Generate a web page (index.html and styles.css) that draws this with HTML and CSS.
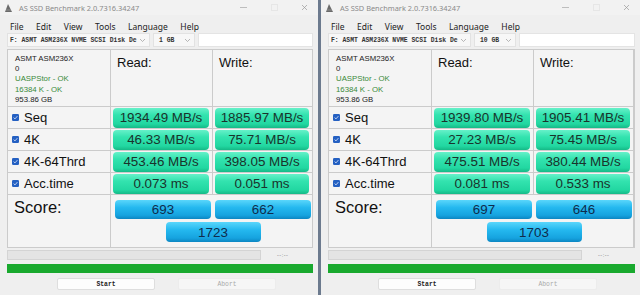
FILE: index.html
```html
<!DOCTYPE html>
<html>
<head>
<meta charset="utf-8">
<link rel="stylesheet" href="styles.css">
</head>
<body>
<div class="win">
  <div class="titlebar">
    <svg class="appicon" width="7" height="8" viewBox="0 0 7 8"><polygon points="3,0 7,8 0,8" fill="#6a6a6a"/><line x1="1" y1="6" x2="6" y2="6" stroke="#aaa" stroke-width="0.6"/></svg>
    <span class="title">AS SSD Benchmark 2.0.7316.34247</span>
    <span class="ctl min"></span>
    <span class="ctl max"></span>
    <svg class="ctl close" width="5" height="5" viewBox="0 0 5 5"><path d="M0 0L5 5M5 0L0 5" stroke="#9a9a9a" stroke-width="0.7"/></svg>
  </div>
  <div class="menubar"><span>File</span><span>Edit</span><span>View</span><span>Tools</span><span>Language</span><span>Help</span></div>
  <div class="toolbar">
    <div class="combo drive"><span>F: ASMT ASM236X NVME SCSI Disk De</span><svg width="5" height="3" viewBox="0 0 5 3"><path d="M0 0L2.5 2.5L5 0" fill="none" stroke="#999" stroke-width="0.7"/></svg></div>
    <div class="combo size"><span>1 GB</span><svg width="5" height="3" viewBox="0 0 5 3"><path d="M0 0L2.5 2.5L5 0" fill="none" stroke="#999" stroke-width="0.7"/></svg></div>
    <div class="field"></div>
  </div>
  <div class="grid">
    <div class="cell info">
      <div>ASMT ASM236X</div>
      <div>0</div>
      <div class="ok">UASPStor - OK</div>
      <div class="ok">16384 K - OK</div>
      <div>953.86 GB</div>
    </div>
    <div class="cell head">Read:</div>
    <div class="cell head">Write:</div>

    <div class="cell label"><svg class="chk" width="7" height="7" viewBox="0 0 7 7"><rect width="7" height="7" rx="1.3" fill="#2460c2"/><path d="M1.6 3.6L3 4.9L5.4 2.1" fill="none" stroke="#dfe9fb" stroke-width="0.8"/></svg>Seq</div>
    <div class="cell val"><div class="bar">1934.49 MB/s</div></div>
    <div class="cell val"><div class="bar">1885.97 MB/s</div></div>

    <div class="cell label"><svg class="chk" width="7" height="7" viewBox="0 0 7 7"><rect width="7" height="7" rx="1.3" fill="#2460c2"/><path d="M1.6 3.6L3 4.9L5.4 2.1" fill="none" stroke="#dfe9fb" stroke-width="0.8"/></svg>4K</div>
    <div class="cell val"><div class="bar">46.33 MB/s</div></div>
    <div class="cell val"><div class="bar">75.71 MB/s</div></div>

    <div class="cell label"><svg class="chk" width="7" height="7" viewBox="0 0 7 7"><rect width="7" height="7" rx="1.3" fill="#2460c2"/><path d="M1.6 3.6L3 4.9L5.4 2.1" fill="none" stroke="#dfe9fb" stroke-width="0.8"/></svg>4K-64Thrd</div>
    <div class="cell val"><div class="bar">453.46 MB/s</div></div>
    <div class="cell val"><div class="bar">398.05 MB/s</div></div>

    <div class="cell label"><svg class="chk" width="7" height="7" viewBox="0 0 7 7"><rect width="7" height="7" rx="1.3" fill="#2460c2"/><path d="M1.6 3.6L3 4.9L5.4 2.1" fill="none" stroke="#dfe9fb" stroke-width="0.8"/></svg>Acc.time</div>
    <div class="cell val"><div class="bar">0.073 ms</div></div>
    <div class="cell val"><div class="bar">0.051 ms</div></div>

    <div class="cell score-label">Score:</div>
    <div class="cell scores">
      <div class="sbar">693</div>
      <div class="sbar">662</div>
      <div class="sbar total">1723</div>
    </div>
  </div>
  <div class="progress-row"><div class="progress"></div><span class="time">--:--</span></div>
  <div class="greenbar"></div>
  <div class="buttons"><div class="btn start">Start</div><div class="btn abort">Abort</div></div>
</div>

<div class="win win-right">
  <div class="titlebar">
    <svg class="appicon" width="7" height="8" viewBox="0 0 7 8"><polygon points="3,0 7,8 0,8" fill="#6a6a6a"/><line x1="1" y1="6" x2="6" y2="6" stroke="#aaa" stroke-width="0.6"/></svg>
    <span class="title">AS SSD Benchmark 2.0.7316.34247</span>
    <span class="ctl min"></span>
    <span class="ctl max"></span>
    <svg class="ctl close" width="5" height="5" viewBox="0 0 5 5"><path d="M0 0L5 5M5 0L0 5" stroke="#9a9a9a" stroke-width="0.7"/></svg>
  </div>
  <div class="menubar"><span>File</span><span>Edit</span><span>View</span><span>Tools</span><span>Language</span><span>Help</span></div>
  <div class="toolbar">
    <div class="combo drive"><span>F: ASMT ASM236X NVME SCSI Disk De</span><svg width="5" height="3" viewBox="0 0 5 3"><path d="M0 0L2.5 2.5L5 0" fill="none" stroke="#999" stroke-width="0.7"/></svg></div>
    <div class="combo size"><span>10 GB</span><svg width="5" height="3" viewBox="0 0 5 3"><path d="M0 0L2.5 2.5L5 0" fill="none" stroke="#999" stroke-width="0.7"/></svg></div>
    <div class="field"></div>
  </div>
  <div class="grid">
    <div class="cell info">
      <div>ASMT ASM236X</div>
      <div>0</div>
      <div class="ok">UASPStor - OK</div>
      <div class="ok">16384 K - OK</div>
      <div>953.86 GB</div>
    </div>
    <div class="cell head">Read:</div>
    <div class="cell head">Write:</div>

    <div class="cell label"><svg class="chk" width="7" height="7" viewBox="0 0 7 7"><rect width="7" height="7" rx="1.3" fill="#2460c2"/><path d="M1.6 3.6L3 4.9L5.4 2.1" fill="none" stroke="#dfe9fb" stroke-width="0.8"/></svg>Seq</div>
    <div class="cell val"><div class="bar">1939.80 MB/s</div></div>
    <div class="cell val"><div class="bar">1905.41 MB/s</div></div>

    <div class="cell label"><svg class="chk" width="7" height="7" viewBox="0 0 7 7"><rect width="7" height="7" rx="1.3" fill="#2460c2"/><path d="M1.6 3.6L3 4.9L5.4 2.1" fill="none" stroke="#dfe9fb" stroke-width="0.8"/></svg>4K</div>
    <div class="cell val"><div class="bar">27.23 MB/s</div></div>
    <div class="cell val"><div class="bar">75.45 MB/s</div></div>

    <div class="cell label"><svg class="chk" width="7" height="7" viewBox="0 0 7 7"><rect width="7" height="7" rx="1.3" fill="#2460c2"/><path d="M1.6 3.6L3 4.9L5.4 2.1" fill="none" stroke="#dfe9fb" stroke-width="0.8"/></svg>4K-64Thrd</div>
    <div class="cell val"><div class="bar">475.51 MB/s</div></div>
    <div class="cell val"><div class="bar">380.44 MB/s</div></div>

    <div class="cell label"><svg class="chk" width="7" height="7" viewBox="0 0 7 7"><rect width="7" height="7" rx="1.3" fill="#2460c2"/><path d="M1.6 3.6L3 4.9L5.4 2.1" fill="none" stroke="#dfe9fb" stroke-width="0.8"/></svg>Acc.time</div>
    <div class="cell val"><div class="bar">0.081 ms</div></div>
    <div class="cell val"><div class="bar">0.533 ms</div></div>

    <div class="cell score-label">Score:</div>
    <div class="cell scores">
      <div class="sbar">697</div>
      <div class="sbar">646</div>
      <div class="sbar total">1703</div>
    </div>
  </div>
  <div class="progress-row"><div class="progress"></div><span class="time">--:--</span></div>
  <div class="greenbar"></div>
  <div class="buttons"><div class="btn start">Start</div><div class="btn abort">Abort</div></div>
</div>
</body>
</html>
```
FILE: styles.css
```css
html, body {
  margin: 0;
  padding: 0;
}
body {
  width: 640px;
  height: 295px;
  overflow: hidden;
  display: flex;
  gap: 3px;
  background: #6c7a8e;
  font-family: "Liberation Sans", Arial, sans-serif;
}
.win {
  width: 318px;
  height: 295px;
  background: #efefef;
  display: flex;
  flex-direction: column;
  flex: none;
}
.win-right {
  width: 319px;
}
.titlebar {
  height: 15px;
  display: flex;
  align-items: center;
  padding-left: 5px;
  margin-bottom: 4px;
  background: #f2f2f2;
}
.appicon {
  flex: none;
}
.title {
  margin-left: 7px;
  font-family: "Noto Sans", sans-serif;
  font-size: 7.4px;
  color: #8a8a8a;
  flex: 1;
}
.ctl {
  flex: none;
}
.min {
  width: 7px;
  height: 0;
  border-top: 1px solid #bdbdbd;
  margin-right: 24px;
}
.max {
  width: 5px;
  height: 5px;
  border: 1px solid #e6e6e6;
  margin-right: 24px;
}
.close {
  margin-right: 11px;
}
.menubar {
  height: 14px;
  display: flex;
  align-items: center;
  padding-left: 10px;
  gap: 12.5px;
  font-family: "Noto Sans", sans-serif;
  font-size: 8.5px;
  color: #222;
}
.toolbar {
  height: 14px;
  display: flex;
  align-items: stretch;
  padding-left: 7px;
  padding-right: 5px;
  gap: 3px;
}
.combo {
  display: flex;
  align-items: center;
  justify-content: space-between;
  background: #f7f7f7;
  border: 1px solid #e2e2e2;
  box-sizing: border-box;
  padding: 0 4px 0 2px;
  font-family: "Liberation Mono", monospace;
  font-size: 6.4px;
  font-weight: bold;
  color: #333;
}
.drive {
  width: 143px;
}
.size {
  width: 42px;
  padding-left: 5px;
}
.field {
  flex: 1;
  background: #fff;
  border: 1px solid #e4e4e4;
}
.grid {
  margin: 2px 5px 0 7px;
  display: grid;
  grid-template-columns: 102px 101px 99px;
  grid-template-rows: 56px 21px 21px 21px 21px 52px;
  gap: 1px;
  padding: 1px;
  background: #cbcbcb;
}
.cell {
  background: #f4f4f4;
}
.info {
  padding: 4px 0 0 7px;
  font-size: 7.8px;
  line-height: 10.2px;
  color: #222;
}
.info .ok {
  color: #3a8a3a;
}
.head {
  padding: 5px 0 0 6px;
  font-size: 13px;
  line-height: 15px;
  color: #111;
}
.label {
  display: flex;
  align-items: center;
  padding-left: 4px;
  font-size: 13px;
  color: #111;
}
.chk {
  margin-right: 5px;
  flex: none;
}
.val {
  padding: 0 3px 0 2px;
  display: flex;
  align-items: center;
}
.bar {
  flex: 1;
  height: 20px;
  border-radius: 4px;
  background: linear-gradient(to bottom, #66f1c9 0%, #33e3af 35%, #22d7a1 80%, #15b987 100%);
  display: flex;
  align-items: center;
  justify-content: center;
  font-size: 13.4px;
  color: #1a332c;
}
.score-label {
  padding: 3px 0 0 6px;
  font-size: 16.5px;
  line-height: 19px;
  color: #111;
}
.scores {
  grid-column: span 2;
  display: grid;
  grid-template-columns: 96px 96px;
  grid-template-rows: 19px 20px;
  column-gap: 4px;
  row-gap: 3px;
  padding: 5px 0 0 4px;
}
.sbar {
  border-radius: 4px;
  background: linear-gradient(to bottom, #5ad6fb 0%, #24b8ef 40%, #16a3df 80%, #0c86c2 100%);
  display: flex;
  align-items: center;
  justify-content: center;
  font-size: 13.4px;
  color: #0f2c4c;
}
.total {
  grid-column: span 2;
  justify-self: center;
  width: 95px;
}
.progress-row {
  margin: 2px 0 0 7px;
  height: 10px;
  display: flex;
  align-items: center;
}
.progress {
  width: 254px;
  height: 10px;
  box-sizing: border-box;
  border: 1px solid #d4d4d4;
  background: #e4e4e4;
}
.time {
  margin-left: 16px;
  font-size: 5.5px;
  color: #777;
  letter-spacing: 0.5px;
}
.greenbar {
  margin: 4px 5px 0 7px;
  height: 9px;
  background: #19a92e;
}
.buttons {
  margin-top: 5px;
  padding-left: 57px;
  display: flex;
  gap: 23px;
}
.btn {
  width: 98px;
  height: 12px;
  box-sizing: border-box;
  border-radius: 2px;
  display: flex;
  align-items: center;
  justify-content: center;
  font-family: "Liberation Mono", monospace;
  font-size: 6.4px;
}
.start {
  background: #fdfdfd;
  border: 1px solid #dedede;
  color: #222;
  font-weight: bold;
}
.abort {
  background: #f6f6f6;
  border: 1px solid #ececec;
  color: #aaa;
}
```
